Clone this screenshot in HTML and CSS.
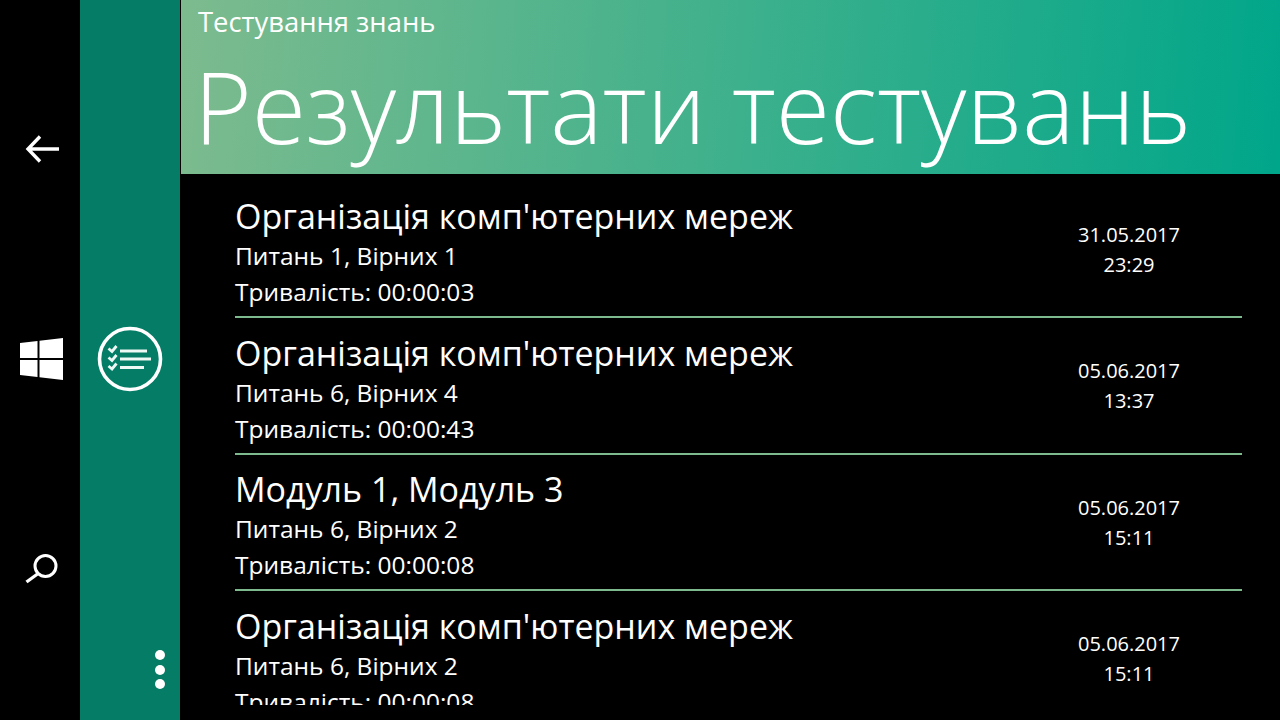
FILE: index.html
```html
<!DOCTYPE html>
<html lang="uk">
<head>
<meta charset="utf-8">
<title>Результати тестувань</title>
<link rel="stylesheet" href="styles.css">
</head>
<body>
<div class="app">
  <nav class="system-bar">
    <svg class="sys-back" width="36" height="30" viewBox="0 0 36 30"><path d="M35 15H5M16 2.500 4 15l12 12.500" fill="none" stroke="#fff" stroke-width="3.4"/></svg>
    <svg class="sys-win" width="44" height="42" viewBox="0 0 44 42"><path d="M0 5 17.500 3V20H0ZM19.500 2.700 43 0V20H19.500ZM0 22H17.500V39L0 37ZM19.500 22H43V42L19.500 39.300Z" fill="#fff"/></svg>
    <svg class="sys-search" width="36" height="30" viewBox="0 0 36 30"><circle cx="21.500" cy="12" r="10.500" fill="none" stroke="#fff" stroke-width="3"/><path d="M13.500 20 2.500 28" fill="none" stroke="#fff" stroke-width="3.400"/></svg>
  </nav>
  <aside class="sidebar">
    <svg class="menu-icon" width="66" height="66" viewBox="0 0 66 66">
      <circle cx="33" cy="33" r="30.500" fill="none" stroke="#fff" stroke-width="3.600"/>
      <path d="M11.500 22.500l3.500 3 4.500-5.500M11.500 31.500l3.500 3 4.500-5.500M11.500 40l3.500 3 4.500-5.500" fill="none" stroke="#eef8f4" stroke-width="2.800"/>
      <path d="M23 25H50M23 33H54M23 41.500H47" fill="none" stroke="#eef8f4" stroke-width="2.800"/>
    </svg>
    <div class="dots"><span></span><span></span><span></span></div>
  </aside>
  <main class="content">
    <header class="hero">
      <div class="app-name">Тестування знань</div>
      <h1 class="page-title">Результати тестувань</h1>
    </header>
    <section class="list">
      <article class="row">
        <div class="info">
          <div class="name">Організація комп'ютерних мереж</div>
          <div class="meta">Питань 1, Вірних 1</div>
          <div class="meta">Тривалість: 00:00:03</div>
        </div>
        <div class="stamp">31.05.2017<br>23:29</div>
      </article>
      <article class="row">
        <div class="info">
          <div class="name">Організація комп'ютерних мереж</div>
          <div class="meta">Питань 6, Вірних 4</div>
          <div class="meta">Тривалість: 00:00:43</div>
        </div>
        <div class="stamp">05.06.2017<br>13:37</div>
      </article>
      <article class="row">
        <div class="info">
          <div class="name">Модуль 1, Модуль 3</div>
          <div class="meta">Питань 6, Вірних 2</div>
          <div class="meta">Тривалість: 00:00:08</div>
        </div>
        <div class="stamp">05.06.2017<br>15:11</div>
      </article>
      <article class="row">
        <div class="info">
          <div class="name">Організація комп'ютерних мереж</div>
          <div class="meta">Питань 6, Вірних 2</div>
          <div class="meta">Тривалість: 00:00:08</div>
        </div>
        <div class="stamp">05.06.2017<br>15:11</div>
      </article>
    </section>
  </main>
</div>
</body>
</html>
```
FILE: styles.css
```css
* { box-sizing: border-box; }
html, body { margin: 0; height: 100%; background: #000; overflow: hidden; }
body { font-family: "Open Sans", "Noto Sans", sans-serif; color: #fff; }
.app { display: flex; width: 1280px; height: 720px; }
.system-bar {
  width: 80px; flex: none; background: #000;
  display: flex; flex-direction: column; align-items: center;
  padding-top: 134px;
}
.sys-back { margin-left: 3px; }
.sys-win { margin-top: 174px; margin-left: 3px; }
.sys-search { margin-top: 174px; margin-left: 3px; }
.sidebar {
  width: 100px; flex: none; background: #047c66;
  display: flex; flex-direction: column; align-items: center;
  padding-top: 326px;
}
.menu-icon { display: block; }
.dots { margin-top: auto; margin-bottom: 31px; align-self: flex-end; margin-right: 15px; display: flex; flex-direction: column; gap: 4.5px; }
.dots span { width: 10px; height: 10px; border-radius: 50%; background: #fff; }
.content { flex: 1; min-width: 0; height: 705px; overflow: hidden; border-left: 1px solid #000; }
.hero {
  height: 174px; padding: 5px 0 0 17px; overflow: hidden;
  background: linear-gradient(95deg, #7dbb8e 0%, #00a68a 100%);
}
.app-name { font-size: 27.4px; line-height: 34px; font-weight: 400; }
.page-title { margin: 8px 0 0 -4px; font-size: 98.8px; line-height: 118px; font-weight: 350; white-space: nowrap; }
.list { padding: 7.5px 38px 0 54px; }
.row {
  display: flex; align-items: center; height: 136.500px;
  padding-bottom: 1px;
  border-bottom: 2px solid #7dbb8e;
}
.info { flex: 1; min-width: 0; padding-top: 8px; }
.name { font-size: 34px; line-height: 44px; }
.meta { font-size: 24.5px; line-height: 36px; }
.stamp { width: 226px; text-align: center; font-size: 20px; line-height: 30px; margin-top: 3px; }
```
